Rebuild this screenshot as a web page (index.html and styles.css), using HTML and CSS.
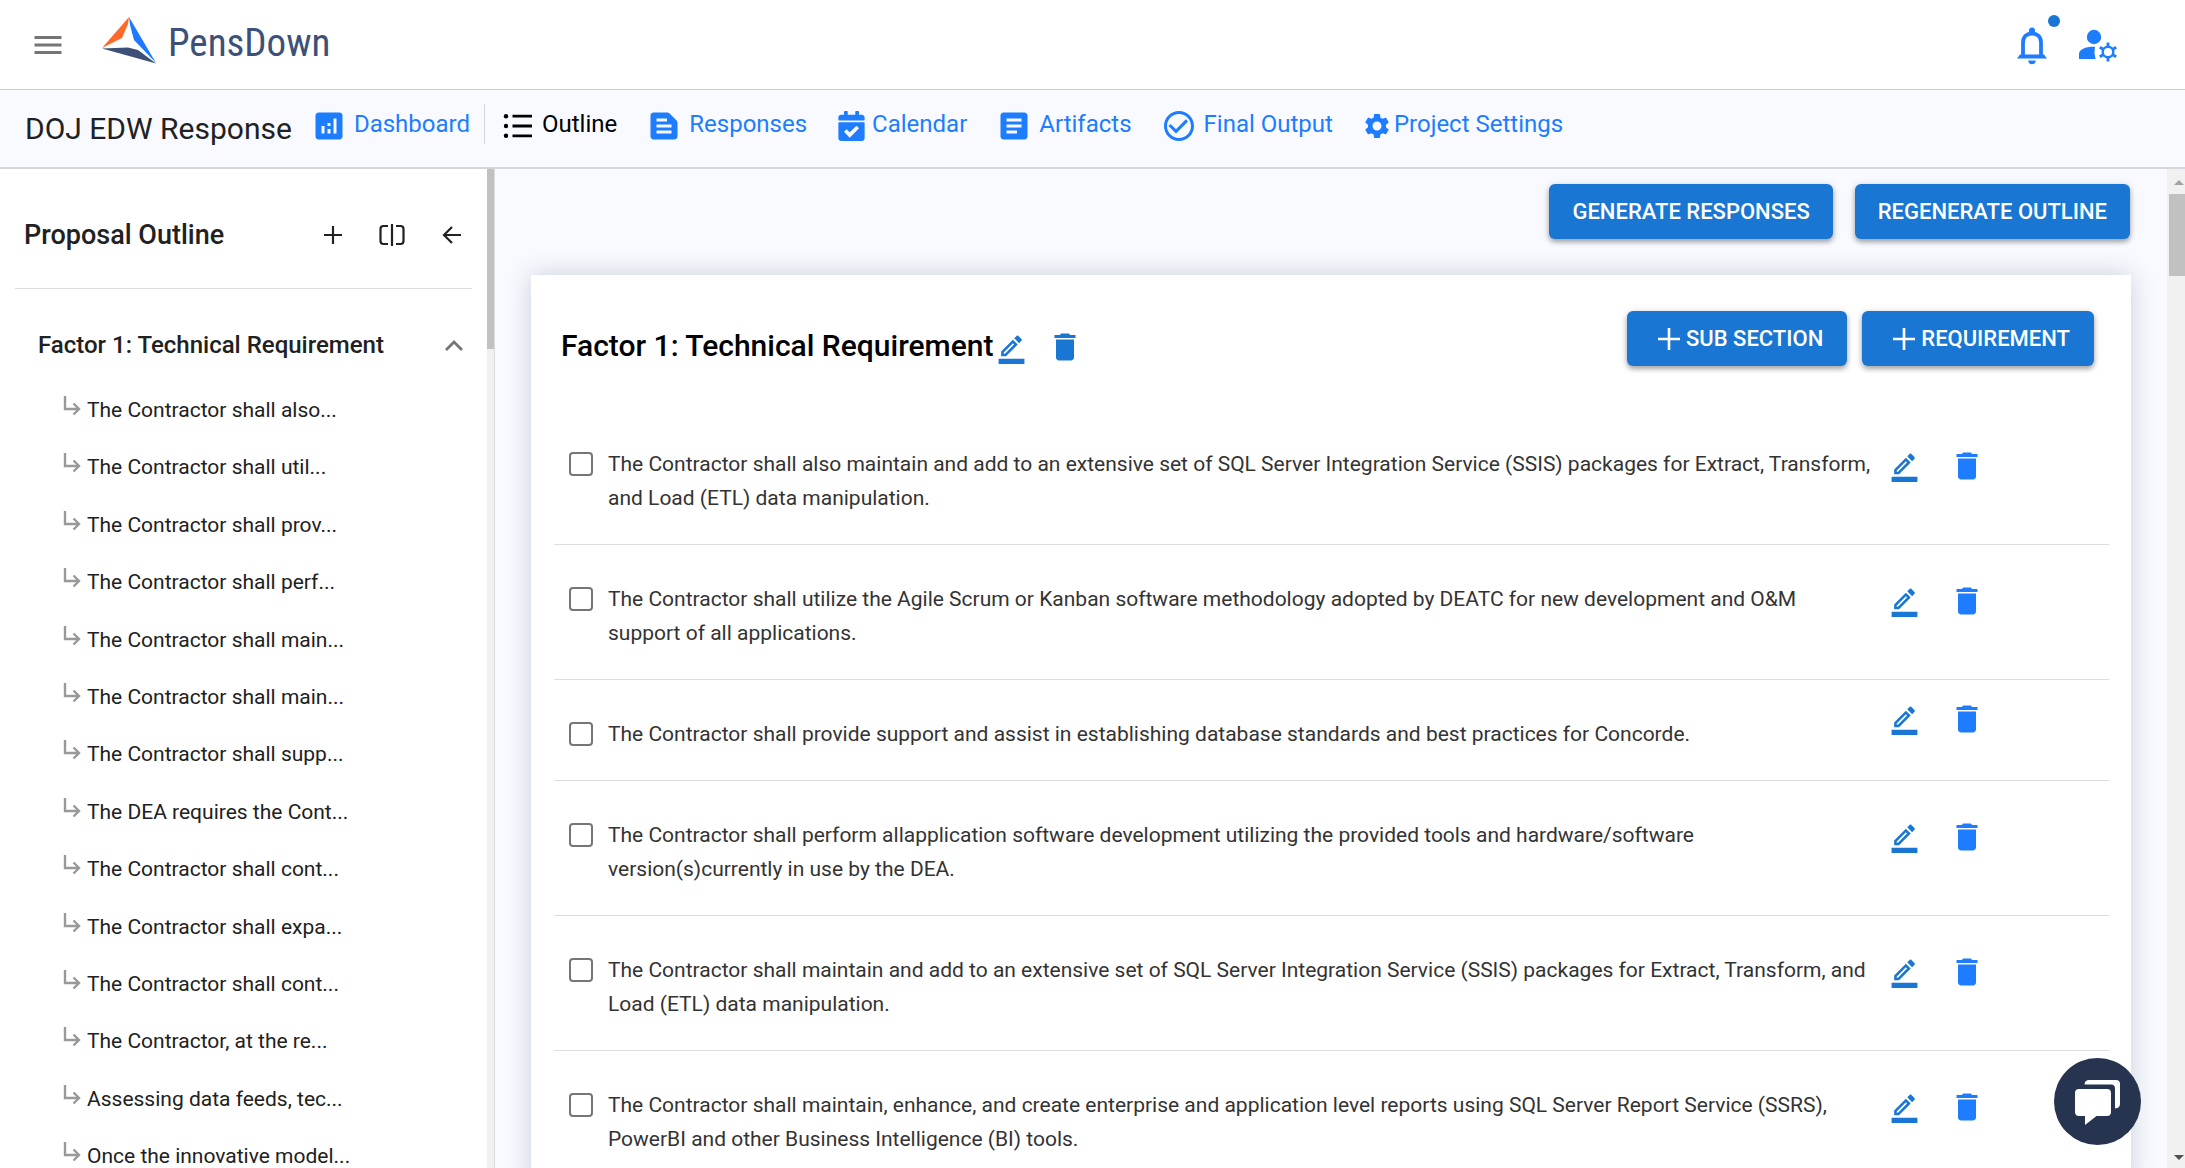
FILE: index.html
```html
<!DOCTYPE html>
<html lang="en">
<head>
<meta charset="utf-8">
<title>PensDown</title>
<link rel="stylesheet" href="styles.css">
</head>
<body>
<svg class="sprite" aria-hidden="true">
  <symbol id="i-edit" viewBox="0 0 24 24"><path d="M16.81 8.94l-3.75-3.75L4 14.25V18h3.75l9.06-9.06zM6 16v-.92l7.06-7.06.92.92L6.92 16H6zM19.71 6.04c.39-.39.39-1.02 0-1.41l-2.34-2.34C17.17 2.09 16.92 2 16.66 2s-.51.1-.7.29l-1.83 1.83 3.75 3.75 1.83-1.83zM2 20h20v4H2z"/></symbol>
  <symbol id="i-trash" viewBox="0 0 24 24"><path d="M6 19c0 1.1.9 2 2 2h8c1.1 0 2-.9 2-2V7H6v12zM19 4h-3.500l-1-1h-5l-1 1H5v2h14V4z"/></symbol>
  <symbol id="i-sub" viewBox="0 0 18 20"><path d="M2 0v13h13M10.500 7.500l5.500 5.500-5.500 5.500" fill="none" stroke="currentColor" stroke-width="2.400"/></symbol>
  <symbol id="i-plus" viewBox="0 0 20 20"><path d="M10 0v20M0 10h20" fill="none" stroke="currentColor" stroke-width="2.400"/></symbol>
</svg>
<div class="app">
  <header class="topbar">
    <button class="icon-btn" aria-label="Menu"><svg class="i36" viewBox="0 0 24 24"><path d="M3 18h18v-2H3v2zm0-5h18v-2H3v2zm0-7v2h18V6H3z"/></svg></button>
    <a class="brand" href="#">
      <svg width="54" height="47" viewBox="0 0 54 47"><path fill="#ff6a2b" d="M27 0L26 7 20 21 0 31z"/><path fill="#1e7bff" d="M27 0L54 46 32 23 28 8z"/><path fill="#3d5078" d="M0 31.500L26 30.500 36 33 54 46.500z"/></svg>
      <span>PensDown</span>
    </a>
    <div class="account">
      <button class="icon-btn bell" aria-label="Notifications">
        <svg width="32" height="38" viewBox="0 0 32 38"><path d="M7 30V15.500C7 9.500 11 6.500 16 6.500s9 3 9 9V30" fill="none" stroke="currentColor" stroke-width="3.800"/><path d="M1 31.500L4 27.500H28L31 31.500zM13 6V3.500a3 3 0 0 1 6 0V6zM12.300 33.500h7.400a3.700 3.700 0 0 1-7.400 0z"/></svg>
        <i class="dot"></i>
      </button>
      <button class="icon-btn" aria-label="Account settings">
        <svg width="38" height="34" viewBox="0 0 38 34"><circle cx="15" cy="8" r="7.200"/><path d="M0 30V25c0-5 7-7.600 16-7.300q-1.400 6 .6 12.300z"/><circle cx="29" cy="23" r="5.300" fill="none" stroke="currentColor" stroke-width="2.400"/><path d="M29 17.500v-4M29 28.500v4M33.800 20.200l3.400-2M24.200 20.200l-3.400-2M33.800 25.800l3.400 2M24.200 25.800l-3.400 2" fill="none" stroke="currentColor" stroke-width="2.800"/></svg>
      </button>
    </div>
  </header>

  <nav class="projectbar">
    <h1>DOJ EDW Response</h1>
    <ul class="tabs">
      <li class="first"><a href="#"><svg class="i36" viewBox="0 0 24 24"><path d="M19 3H5c-1.100 0-2 .9-2 2v14c0 1.100.9 2 2 2h14c1.100 0 2-.9 2-2V5c0-1.100-.9-2-2-2zM9 17H7v-5h2v5zm4 0h-2v-3h2v3zm0-5h-2v-2h2v2zm4 5h-2V7h2v10z"/></svg>Dashboard</a></li>
      <li class="active"><a href="#"><svg width="30" height="30" viewBox="0 0 30 30"><path d="M9.500 5.200H29M9.500 15H29M9.500 24.800H29" stroke="currentColor" stroke-width="2.800"/><circle cx="3" cy="5.200" r="2.200"/><circle cx="3" cy="15" r="2.200"/><circle cx="3" cy="24.800" r="2.200"/></svg>Outline</a></li>
      <li><a href="#"><svg class="i36" viewBox="0 0 24 24"><path d="M20.410 8.410l-4.830-4.830c-.37-.37-.88-.58-1.410-.58H5c-1.100 0-2 .9-2 2v14c0 1.100.9 2 2 2h14c1.100 0 2-.9 2-2V9.830c0-.53-.21-1.040-.59-1.420zM7 7h7v2H7V7zm10 10H7v-2h10v2zm0-4H7v-2h10v2z"/></svg>Responses</a></li>
      <li class="cal"><a href="#"><svg width="27" height="30" viewBox="0 0 448 512"><path d="M436 160H12c-6.627 0-12-5.373-12-12v-36c0-26.510 21.490-48 48-48h48V12c0-6.627 5.373-12 12-12h40c6.627 0 12 5.373 12 12v52h128V12c0-6.627 5.373-12 12-12h40c6.627 0 12 5.373 12 12v52h48c26.510 0 48 21.490 48 48v36c0 6.627-5.373 12-12 12zM12 192h424c6.627 0 12 5.373 12 12v260c0 26.510-21.490 48-48 48H48c-26.510 0-48-21.490-48-48V204c0-6.627 5.373-12 12-12zm333.296 95.947l-28.169-28.398c-4.667-4.705-12.265-4.736-16.970-.068L194.120 364.665l-45.980-46.352c-4.667-4.705-12.266-4.736-16.971-.068l-28.397 28.170c-4.705 4.667-4.736 12.265-.068 16.970l82.601 83.269c4.667 4.705 12.265 4.736 16.970.068l142.953-141.805c4.705-4.667 4.736-12.265.068-16.970z"/></svg>Calendar</a></li>
      <li><a href="#"><svg class="i36" viewBox="0 0 24 24"><path d="M19 3H5c-1.100 0-2 .9-2 2v14c0 1.100.9 2 2 2h14c1.100 0 2-.9 2-2V5c0-1.100-.9-2-2-2zm-5 14H7v-2h7v2zm3-4H7v-2h10v2zm0-4H7V7h10v2z"/></svg>Artifacts</a></li>
      <li><a href="#"><svg class="i36" viewBox="0 0 24 24"><path d="M16.590 7.580L10 14.170l-3.590-3.580L5 12l5 5 8-8zM12 2C6.480 2 2 6.480 2 12s4.480 10 10 10 10-4.480 10-10S17.520 2 12 2zm0 18c-4.420 0-8-3.580-8-8s3.580-8 8-8 8 3.580 8 8-3.580 8-8 8z"/></svg>Final Output</a></li>
      <li class="set"><a href="#"><svg width="30" height="30" viewBox="0 0 24 24"><path d="M19.140 12.940c.04-.3.06-.61.06-.94 0-.32-.02-.64-.07-.94l2.030-1.580c.18-.14.23-.41.12-.61l-1.920-3.320c-.12-.22-.37-.29-.59-.22l-2.390.96c-.5-.38-1.030-.7-1.620-.94l-.36-2.540c-.04-.24-.24-.41-.48-.41h-3.840c-.24 0-.43.17-.47.41l-.36 2.540c-.59.24-1.130.57-1.620.94l-2.390-.96c-.22-.08-.47 0-.59.22L2.740 8.870c-.12.21-.08.47.12.61l2.030 1.580c-.05.3-.09.63-.09.94s.02.64.07.94l-2.030 1.580c-.18.14-.23.41-.12.61l1.920 3.320c.12.22.37.29.59.22l2.390-.96c.5.38 1.030.7 1.620.94l.36 2.540c.05.24.24.41.48.41h3.840c.24 0 .44-.17.47-.41l.36-2.540c.59-.24 1.130-.56 1.620-.94l2.390.96c.22.08.47 0 .59-.22l1.920-3.320c.12-.22.07-.47-.12-.61l-2.010-1.580zM12 15.600c-1.980 0-3.600-1.620-3.600-3.600s1.620-3.600 3.600-3.600 3.600 1.620 3.600 3.600-1.620 3.600-3.600 3.600z"/></svg>Project Settings</a></li>
    </ul>
  </nav>

  <div class="workspace">
    <aside class="sidebar">
      <div class="side-body">
        <div class="side-head">
          <h2>Proposal Outline</h2>
          <button class="icon-btn" aria-label="Add"><svg width="18" height="18"><use href="#i-plus"/></svg></button>
          <button class="icon-btn" aria-label="Split view"><svg width="26" height="22" viewBox="0 0 26 22"><path d="M9 2H4.500Q1.500 2 1.500 5v12q0 3 3 3H9M17 2h4.500q3 0 3 3v12q0 3-3 3H17M13 0v22" fill="none" stroke="currentColor" stroke-width="2.200"/></svg></button>
          <button class="icon-btn" aria-label="Collapse outline"><svg width="19" height="18" viewBox="0 0 19 18"><path d="M10 1L2 9l8 8M2 9h17" fill="none" stroke="currentColor" stroke-width="2.200"/></svg></button>
        </div>
        <div class="side-section">
          <h3>Factor 1: Technical Requirement</h3>
          <button class="icon-btn muted" aria-label="Collapse section"><svg width="18" height="11" viewBox="0 0 18 11"><path d="M1 10l8-8 8 8" fill="none" stroke="currentColor" stroke-width="2.800"/></svg></button>
        </div>
        <ul class="outline">
          <li><svg><use href="#i-sub"/></svg><a href="#">The Contractor shall also...</a></li>
          <li><svg><use href="#i-sub"/></svg><a href="#">The Contractor shall util...</a></li>
          <li><svg><use href="#i-sub"/></svg><a href="#">The Contractor shall prov...</a></li>
          <li><svg><use href="#i-sub"/></svg><a href="#">The Contractor shall perf...</a></li>
          <li><svg><use href="#i-sub"/></svg><a href="#">The Contractor shall main...</a></li>
          <li><svg><use href="#i-sub"/></svg><a href="#">The Contractor shall main...</a></li>
          <li><svg><use href="#i-sub"/></svg><a href="#">The Contractor shall supp...</a></li>
          <li><svg><use href="#i-sub"/></svg><a href="#">The DEA requires the Cont...</a></li>
          <li><svg><use href="#i-sub"/></svg><a href="#">The Contractor shall cont...</a></li>
          <li><svg><use href="#i-sub"/></svg><a href="#">The Contractor shall expa...</a></li>
          <li><svg><use href="#i-sub"/></svg><a href="#">The Contractor shall cont...</a></li>
          <li><svg><use href="#i-sub"/></svg><a href="#">The Contractor, at the re...</a></li>
          <li><svg><use href="#i-sub"/></svg><a href="#">Assessing data feeds, tec...</a></li>
          <li><svg><use href="#i-sub"/></svg><a href="#">Once the innovative model...</a></li>
        </ul>
      </div>
      <div class="scroll thin"><div class="thumb"></div></div>
    </aside>

    <main class="main">
      <div class="actions">
        <button class="btn">GENERATE RESPONSES</button>
        <button class="btn">REGENERATE OUTLINE</button>
      </div>
      <section class="card">
        <div class="card-head">
          <h2>Factor 1: Technical Requirement</h2>
          <button class="icon-btn edit" aria-label="Edit section"><svg class="i31"><use href="#i-edit"/></svg></button>
          <button class="icon-btn edit" aria-label="Delete section"><svg class="i36"><use href="#i-trash"/></svg></button>
          <div class="card-btns">
            <button class="btn plus"><svg width="22" height="22"><use href="#i-plus"/></svg>SUB SECTION</button>
            <button class="btn plus"><svg width="22" height="22"><use href="#i-plus"/></svg>REQUIREMENT</button>
          </div>
        </div>
        <ul class="reqs">
          <li><input type="checkbox" id="r1"><label for="r1">The Contractor shall also maintain and add to an extensive set of SQL Server Integration Service (SSIS) packages for Extract, Transform, and Load (ETL) data manipulation.</label>
            <div class="tools"><button class="icon-btn edit" aria-label="Edit"><svg class="i31"><use href="#i-edit"/></svg></button><button class="icon-btn" aria-label="Delete"><svg class="i36"><use href="#i-trash"/></svg></button></div></li>
          <li><input type="checkbox" id="r2"><label for="r2">The Contractor shall utilize the Agile Scrum or Kanban software methodology adopted by DEATC for new development and O&amp;M support of all applications.</label>
            <div class="tools"><button class="icon-btn edit" aria-label="Edit"><svg class="i31"><use href="#i-edit"/></svg></button><button class="icon-btn" aria-label="Delete"><svg class="i36"><use href="#i-trash"/></svg></button></div></li>
          <li><input type="checkbox" id="r3"><label for="r3">The Contractor shall provide support and assist in establishing database standards and best practices for Concorde.</label>
            <div class="tools"><button class="icon-btn edit" aria-label="Edit"><svg class="i31"><use href="#i-edit"/></svg></button><button class="icon-btn" aria-label="Delete"><svg class="i36"><use href="#i-trash"/></svg></button></div></li>
          <li><input type="checkbox" id="r4"><label for="r4">The Contractor shall perform allapplication software development utilizing the provided tools and hardware/software version(s)currently in use by the DEA.</label>
            <div class="tools"><button class="icon-btn edit" aria-label="Edit"><svg class="i31"><use href="#i-edit"/></svg></button><button class="icon-btn" aria-label="Delete"><svg class="i36"><use href="#i-trash"/></svg></button></div></li>
          <li><input type="checkbox" id="r5"><label for="r5">The Contractor shall maintain and add to an extensive set of SQL Server Integration Service (SSIS) packages for Extract, Transform, and Load (ETL) data manipulation.</label>
            <div class="tools"><button class="icon-btn edit" aria-label="Edit"><svg class="i31"><use href="#i-edit"/></svg></button><button class="icon-btn" aria-label="Delete"><svg class="i36"><use href="#i-trash"/></svg></button></div></li>
          <li><input type="checkbox" id="r6"><label for="r6">The Contractor shall maintain, enhance, and create enterprise and application level reports using SQL Server Report Service (SSRS), PowerBI and other Business Intelligence (BI) tools.</label>
            <div class="tools"><button class="icon-btn edit" aria-label="Edit"><svg class="i31"><use href="#i-edit"/></svg></button><button class="icon-btn" aria-label="Delete"><svg class="i36"><use href="#i-trash"/></svg></button></div></li>
        </ul>
      </section>
    </main>
    <div class="scroll wide">
      <svg class="up" width="10" height="5" viewBox="0 0 10 5"><path d="M0 5l5-5 5 5z"/></svg>
      <div class="thumb"></div>
      <svg class="down" width="10" height="5" viewBox="0 0 10 5"><path d="M0 0l5 5 5-5z"/></svg>
    </div>
  </div>
</div>
<button class="chat" aria-label="Open chat"><svg width="46" height="46" viewBox="0 0 46 46"><path d="M4 10h28q4 0 4 4v19q0 4-4 4H21.500L10 46V37H4q-4 0-4-4V14q0-4 4-4z"/><path d="M9.500 5.500Q9.800 1 14 1h27q4 0 4 4v20q0 4-5 4.500V9.500q0-4-4-4z"/></svg></button>
</body>
</html>
```
FILE: styles.css
```css
* { box-sizing: border-box; }
body { margin: 0; font-family: Roboto, "Liberation Sans", sans-serif; color: #212121; background: #fff; }
h1, h2, h3, ul { margin: 0; padding: 0; }
ul { list-style: none; }
a { color: inherit; text-decoration: none; }
svg { display: block; flex: none; fill: currentColor; }
.sprite { position: absolute; width: 0; height: 0; }
.i36 { width: 36px; height: 36px; }
.i31 { width: 31px; height: 31px; }
.icon-btn { display: block; flex: none; padding: 0; border: 0; background: none; color: inherit; cursor: pointer; }

.app { height: 100vh; display: flex; flex-direction: column; overflow: hidden; }

.topbar { flex: none; display: flex; align-items: center; height: 90px; padding: 0 68px 0 30px; border-bottom: 1px solid #ccc; color: #757575; }
.brand { display: flex; align-items: center; gap: 12px; margin-left: 36px; padding-bottom: 8px; color: #3d5078; font: 39px/40px "Liberation Sans Narrow", "Roboto Condensed", Roboto, sans-serif; }
.brand span { padding-top: 5px; }
.account { display: flex; align-items: center; gap: 31px; margin-left: auto; padding-top: 2px; color: #1e7dff; }
.bell { position: relative; }
.dot { position: absolute; right: -12px; top: -12px; width: 12px; height: 12px; border-radius: 50%; background: #1976d2; }

.projectbar { flex: none; display: flex; align-items: center; height: 79px; padding: 0 25px; border-bottom: 2px solid #d3d5da; background: #f8faff; }
.projectbar h1 { font-size: 30px; line-height: 36px; font-weight: 400; white-space: nowrap; }
.tabs { display: flex; align-items: center; padding-bottom: 10px; color: #1e7dff; font-size: 24px; line-height: 28px; white-space: nowrap; }
.tabs li { margin-left: 29px; }
.tabs a { display: flex; align-items: center; gap: 7px; }
.tabs svg { margin-top: 4px; }
.tabs .first { margin-left: 19px; padding-right: 14px; border-right: 1px solid #d3d5da; }
.tabs .active { margin-left: 18px; color: #000; }
.tabs .active a { gap: 9px; }
.tabs .cal { margin-left: 31px; }
.tabs .set a { gap: 2px; }

.workspace { flex: 1; min-height: 0; display: flex; }
.sidebar { flex: none; display: flex; width: 495px; border-right: 1px solid #ddd; }
.side-body { flex: 1; padding: 0 15px; overflow: hidden; }
.side-head { display: flex; align-items: center; height: 120px; padding: 12px 11px 0 9px; border-bottom: 1px solid #ddd; gap: 37px; }
.side-head h2 { flex: 1; font-size: 27px; line-height: 32px; font-weight: 500; }
.side-section { display: flex; align-items: center; justify-content: space-between; height: 107px; padding: 5px 9px 0 23px; }
.side-section h3 { font-size: 24px; line-height: 28px; font-weight: 500; }
.muted { color: #757575; }
.outline { font-size: 21px; line-height: 1.4; }
.outline li { display: flex; gap: 6px; margin-bottom: 28px; padding-left: 48px; }
.outline svg { width: 18px; height: 20px; color: #999; }

.scroll { flex: none; background: #f1f1f1; }
.scroll .thumb { background: #c1c1c1; }
.thin { width: 7px; }
.thin .thumb { height: 180px; }
.wide { display: flex; flex-direction: column; width: 18px; padding: 11px 0 8px 2px; }
.wide .thumb { height: 82px; margin: 9px 0 auto; }
.up { margin-left: 5px; color: #a3a3a3; }
.down { margin-left: 5px; color: #505050; }

.main { flex: 1; min-width: 0; padding: 15px 36px 0; overflow: hidden; background: #f8faff; }
.actions { display: flex; justify-content: flex-end; gap: 22px; padding-right: 1px; }
.btn { display: flex; align-items: center; height: 55px; padding: 0 23px; border: 0; border-radius: 6px; background: #1976d2; color: #fff; font: 500 22px/28px Roboto, sans-serif; white-space: nowrap; box-shadow: 0 3px 5px rgba(0,0,0,.3), 0 1px 8px rgba(0,0,0,.12); cursor: pointer; }
.plus { gap: 6px; padding: 0 24px 0 31px; }
.card { margin-top: 36px; padding: 36px 22px 0 23px; background: #fff; box-shadow: 0 0 24px rgba(50,55,90,.22); }
.card-head { display: flex; align-items: center; height: 55px; padding: 0 15px 0 7px; }
.card-head h2 { margin-right: 3px; padding-top: 14px; color: #000; font-size: 30px; line-height: 36px; font-weight: 500; }
.edit { color: #1976d2; }
.card-head .edit { margin: 16px 20px 0 0; }
.card-head .edit:nth-of-type(1) { margin-top: 20px; }
.card-btns { display: flex; gap: 15px; margin-left: auto; }
.reqs { padding-top: 44px; color: #333; font-size: 21px; line-height: 34px; }
.reqs li { display: flex; align-items: flex-start; border-bottom: 1px solid #ddd; }
.reqs input { appearance: none; flex: none; width: 24px; height: 24px; margin: 42px 15px 0 15px; border: 2px solid #767676; border-radius: 4px; background: #fff; }
.reqs label { flex: 1; padding: 37px 18px 29px 0; }
.tools { align-self: center; flex: none; display: flex; align-items: center; gap: 29px; width: 220px; padding-bottom: 22px; color: #1e7dff; }

.chat { position: fixed; right: 44px; bottom: 23px; display: flex; align-items: center; justify-content: center; width: 87px; height: 87px; padding: 0; border: 0; border-radius: 50%; background: #26344f; color: #fff; cursor: pointer; }
```
